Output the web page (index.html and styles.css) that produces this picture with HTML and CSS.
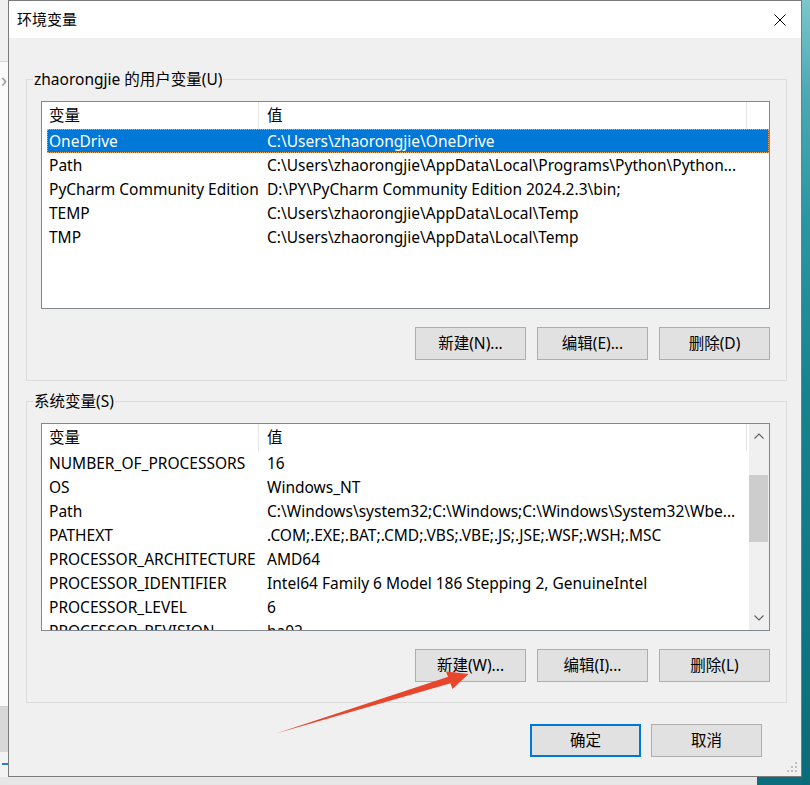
FILE: index.html
```html
<!DOCTYPE html>
<html lang="zh-CN">
<head>
<meta charset="utf-8">
<title>环境变量</title>
<link rel="stylesheet" href="styles.css">
</head>
<body>
<div class="screen">
  <div class="left-strip">
    <div class="ls-top"></div>
    <div class="ls-mid"><span class="ls-chev">›</span></div>
    <div class="ls-block"></div>
    <div class="ls-low"><span class="ls-blue"></span></div>
  </div>

  <div class="dialog">
    <div class="titlebar">
      <span class="title">环境变量</span>
      <span class="close">
        <svg width="12" height="12" viewBox="0 0 12 12"><path d="M0.5 0.5 L11.5 11.5 M11.5 0.5 L0.5 11.5" stroke="#000" stroke-width="1" fill="none"/></svg>
      </span>
    </div>

    <div class="content">
      <fieldset class="group group-user">
        <legend>zhaorongjie 的用户变量(U)</legend>
        <div class="list">
          <div class="list-body">
            <div class="row head"><span class="c1">变量</span><span class="c2">值</span></div>
            <div class="row selected"><span class="c1">OneDrive</span><span class="c2">C:\Users\zhaorongjie\OneDrive</span></div>
            <div class="row"><span class="c1">Path</span><span class="c2">C:\Users\zhaorongjie\AppData\Local\Programs\Python\Python...</span></div>
            <div class="row"><span class="c1">PyCharm Community Edition</span><span class="c2">D:\PY\PyCharm Community Edition 2024.2.3\bin;</span></div>
            <div class="row"><span class="c1">TEMP</span><span class="c2">C:\Users\zhaorongjie\AppData\Local\Temp</span></div>
            <div class="row"><span class="c1">TMP</span><span class="c2">C:\Users\zhaorongjie\AppData\Local\Temp</span></div>
          </div>
        </div>
        <div class="btn-row">
          <button class="btn">新建(N)...</button>
          <button class="btn">编辑(E)...</button>
          <button class="btn">删除(D)</button>
        </div>
      </fieldset>

      <fieldset class="group group-sys">
        <legend>系统变量(S)</legend>
        <div class="list">
          <div class="list-body">
            <div class="row head"><span class="c1">变量</span><span class="c2">值</span></div>
            <div class="row"><span class="c1">NUMBER_OF_PROCESSORS</span><span class="c2">16</span></div>
            <div class="row"><span class="c1">OS</span><span class="c2">Windows_NT</span></div>
            <div class="row"><span class="c1">Path</span><span class="c2">C:\Windows\system32;C:\Windows;C:\Windows\System32\Wbe...</span></div>
            <div class="row"><span class="c1">PATHEXT</span><span class="c2">.COM;.EXE;.BAT;.CMD;.VBS;.VBE;.JS;.JSE;.WSF;.WSH;.MSC</span></div>
            <div class="row"><span class="c1">PROCESSOR_ARCHITECTURE</span><span class="c2">AMD64</span></div>
            <div class="row"><span class="c1">PROCESSOR_IDENTIFIER</span><span class="c2">Intel64 Family 6 Model 186 Stepping 2, GenuineIntel</span></div>
            <div class="row"><span class="c1">PROCESSOR_LEVEL</span><span class="c2">6</span></div>
            <div class="row"><span class="c1">PROCESSOR_REVISION</span><span class="c2">ba02</span></div>
          </div>
          <div class="scrollbar">
            <div class="sb-btn">
              <svg width="10" height="6" viewBox="0 0 10 6"><path d="M0.5 5.5 L5 1 L9.5 5.5" stroke="#606060" stroke-width="1.1" fill="none"/></svg>
            </div>
            <div class="sb-track"><div class="sb-thumb"></div></div>
            <div class="sb-btn">
              <svg width="10" height="6" viewBox="0 0 10 6"><path d="M0.5 0.5 L5 5 L9.5 0.5" stroke="#606060" stroke-width="1.1" fill="none"/></svg>
            </div>
          </div>
        </div>
        <div class="btn-row">
          <button class="btn">新建(W)...</button>
          <button class="btn">编辑(I)...</button>
          <button class="btn">删除(L)</button>
        </div>
      </fieldset>

      <div class="dlg-buttons">
        <button class="btn btn-default">确定</button>
        <button class="btn">取消</button>
      </div>
    </div>

    <svg class="grip" width="12" height="12" viewBox="0 0 12 12">
      <rect x="8" y="0" width="2" height="2" fill="#bfbfbf"/>
      <rect x="4" y="4" width="2" height="2" fill="#bfbfbf"/>
      <rect x="8" y="4" width="2" height="2" fill="#bfbfbf"/>
      <rect x="0" y="8" width="2" height="2" fill="#bfbfbf"/>
      <rect x="4" y="8" width="2" height="2" fill="#bfbfbf"/>
      <rect x="8" y="8" width="2" height="2" fill="#bfbfbf"/>
    </svg>
  </div>

  <div class="right-strip"></div>

  <svg class="annot" width="810" height="785" viewBox="0 0 810 785">
    <polygon points="276,733.5 449,676.5 451.5,683" fill="#e8452d"/>
    <polygon points="468.5,674 446,671.5 452.5,689" fill="#e8452d"/>
  </svg>
</div>
</body>
</html>
```

FILE: styles.css
```css
* {
  box-sizing: border-box;
}

html, body {
  margin: 0;
  padding: 0;
}

body {
  width: 810px;
  height: 785px;
  overflow: hidden;
  font-family: "Noto Sans", "Noto Sans CJK SC", sans-serif;
  font-size: 15.5px;
  color: #000;
}

.screen {
  position: relative;
  width: 810px;
  height: 785px;
  display: flex;
  align-items: flex-start;
  background: linear-gradient(to right, #e6e6e6 0, #e6e6e6 757px, #0c6d7c 757px);
}

/* window behind, on the left */
.left-strip {
  width: 8px;
  height: 777px;
  display: flex;
  flex-direction: column;
}

.ls-top {
  height: 62px;
  background: #f0f0f0;
  border-bottom: 1px solid #d6d6d6;
}

.ls-mid {
  height: 644px;
  background: #fbfbfb;
}

.ls-chev {
  display: block;
  margin-top: 8px;
  margin-left: 1px;
  font-size: 20px;
  line-height: 20px;
  color: #9a9a9a;
}

.ls-block {
  height: 46px;
  background: #d8d8d8;
  border-top: 1px solid #cfcfcf;
}

.ls-low {
  flex: 1;
  background: #f3f3f3;
  padding-top: 11px;
}

.ls-blue {
  display: block;
  margin-left: 2px;
  width: 6px;
  height: 2px;
  background: #2c7fd0;
}

/* dialog */
.dialog {
  position: relative;
  width: 794px;
  height: 777px;
  border: 1px solid #7a7a7a;
  background: #f0f0f0;
  display: flex;
  flex-direction: column;
}

.titlebar {
  height: 37px;
  background: #fff;
  display: flex;
  align-items: center;
  justify-content: space-between;
}

.title {
  padding-left: 8px;
  line-height: 37px;
  font-size: 15px;
}

.close {
  width: 42px;
  height: 37px;
  display: flex;
  align-items: center;
  justify-content: center;
}

.close svg {
  display: block;
}

.content {
  flex: 1;
  padding: 0 14px 0 17px;
  display: flex;
  flex-direction: column;
}

.group {
  margin: 0;
  border: 1px solid #dcdcdc;
  padding: 12px 16px 20px 14px;
  min-width: 0;
}

.group-user {
  margin-top: 31px;
}

.group-sys {
  margin-top: 10px;
}

.group legend {
  margin-left: -8px;
  padding: 0 1px;
  line-height: 20px;
  height: 20px;
}

/* list view */
.list {
  height: 208px;
  border: 1px solid #828790;
  background: #fff;
  display: flex;
  overflow: hidden;
}

.list-body {
  flex: 1;
  min-width: 0;
  overflow: hidden;
}

.row {
  display: grid;
  grid-template-columns: 212px 488px;
  margin-left: 5px;
  height: 24px;
  line-height: 24px;
  white-space: nowrap;
}

.row .c1,
.row .c2 {
  overflow: hidden;
}

.row .c1 {
  padding-left: 2px;
}

.row .c2 {
  padding-left: 8px;
}

.row.head {
  height: 27px;
  line-height: 27px;
}

.row.head .c1,
.row.head .c2 {
  border-right: 1px solid #e5e5e5;
}

.row.selected {
  background: #0078d7;
  color: #fff;
  outline: 1px dotted #f2a75a;
  outline-offset: -1px;
}

/* scrollbar */
.scrollbar {
  width: 20px;
  background: #f0f0f0;
  display: flex;
  flex-direction: column;
}

.sb-btn {
  height: 24px;
  display: flex;
  align-items: center;
  justify-content: center;
}

.sb-btn svg {
  display: block;
}

.sb-track {
  flex: 1;
  padding-top: 27px;
}

.sb-thumb {
  height: 67px;
  margin-right: 1px;
  background: #cdcdcd;
}

/* buttons */
.btn-row {
  margin-top: 18px;
  display: flex;
  justify-content: flex-end;
  gap: 11px;
}

.btn {
  width: 111px;
  height: 33px;
  margin: 0;
  padding: 0;
  border: 1px solid #adadad;
  background: #e1e1e1;
  font-family: "Noto Sans", "Noto Sans CJK SC", sans-serif;
  font-size: 15.5px;
  color: #000;
  line-height: 31px;
  text-align: center;
}

.btn-default {
  border: 2px solid #0078d7;
  line-height: 29px;
}

.dlg-buttons {
  margin-top: 21px;
  margin-right: 25px;
  display: flex;
  justify-content: flex-end;
  gap: 10px;
}

.grip {
  position: absolute;
  right: 2px;
  bottom: 2px;
}

/* desktop on the right */
.right-strip {
  width: 8px;
  height: 785px;
  background: linear-gradient(to bottom, #7cc6cc 0%, #4aa9b4 12%, #2996a4 28%, #15838f 50%, #0f7887 75%, #0b6b7a 100%);
}

.annot {
  position: absolute;
  left: 0;
  top: 0;
  pointer-events: none;
}
```
